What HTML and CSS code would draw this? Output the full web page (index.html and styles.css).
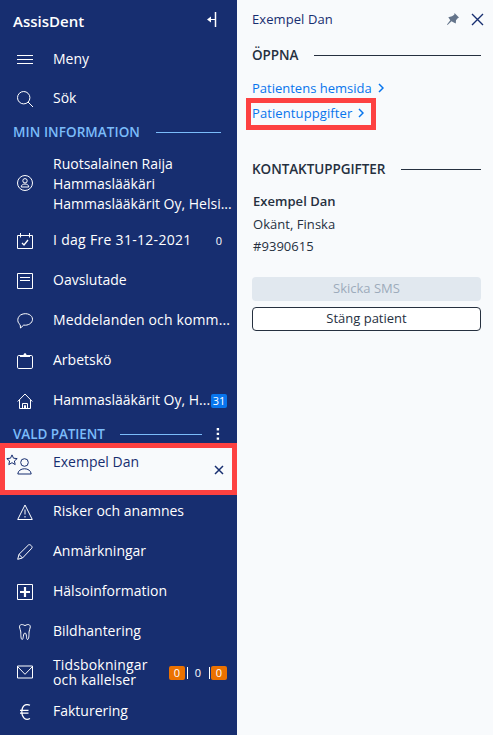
FILE: index.html
```html
<!DOCTYPE html>
<html lang="sv">
<head>
<meta charset="utf-8">
<title>AssisDent</title>
<link rel="stylesheet" href="styles.css">
</head>
<body>
<nav class="sidebar">
  <header class="brand"><span>AssisDent</span>
    <svg class="collapse" width="12" height="16" viewBox="0 0 12 16"><path d="M9.5 0v15" stroke-width="1.5"/><path d="M9 7.5H2"/><path d="M5 4.5v6l-4-3z" fill="currentColor" stroke="none"/></svg>
  </header>
  <a class="row menu"><svg class="icon" viewBox="0 0 16 16"><path d="M0 3.5h16M0 7.5h16M0 11.5h16"/></svg><span class="label">Meny</span></a>
  <a class="row search"><svg class="icon" viewBox="0 0 16 16"><circle cx="6.7" cy="6.7" r="6.2"/><path d="M11 11l5 5"/></svg><span class="label">Sök</span></a>
  <h2 class="section light"><span>MIN INFORMATION</span></h2>
  <a class="row profile"><svg class="icon" viewBox="0 0 16 16"><circle cx="8" cy="8" r="7.5"/><circle cx="8" cy="5.8" r="2.2"/><path d="M4.2 12c0-4 7.600-4 7.600 0z"/></svg><span class="label">Ruotsalainen Raija<br>Hammaslääkäri<br>Hammaslääkärit Oy, Helsi...</span></a>
  <a class="row"><svg class="icon" viewBox="0 0 16 16"><path d="M.5 2.500h15v13H.5zM3.500 0v4.500M12.500 0v4.500"/><path d="M5 10l2 2 4-5" stroke-width="1.300"/></svg><span class="label today">I dag Fre 31-12-2021</span><span class="count">0</span></a>
  <a class="row"><svg class="icon" viewBox="0 0 16 16"><path d="M.5.5h15v15H.5zM3 4.500h10M3 7.500h10"/></svg><span class="label">Oavslutade</span></a>
  <a class="row"><svg class="icon" viewBox="0 0 16 16"><path d="M3.200 11.800C-.6 9 .2 3 5 1.300c5-1.800 10.500.7 10.500 4.900 0 4-4.500 6.600-8.800 5.900L3.500 15z"/></svg><span class="label wide">Meddelanden och komm...</span></a>
  <a class="row"><svg class="icon" viewBox="0 0 16 16"><rect x=".5" y="2.500" width="15" height="13" rx="1.300"/><path d="M3 2h3.500c0-2.500 3-2.500 3 0H13v2H3z" fill="currentColor" stroke="none"/></svg><span class="label">Arbetskö</span></a>
  <a class="row"><svg class="icon" viewBox="0 0 16 16"><path d="M.7 8.500L8 1l7.300 7.500M2.500 7v8.500h11V7M5.500 15.500v-5h5v5M7.500 15.500v-3h1v3"/></svg><span class="label">Hammaslääkärit Oy, H...</span><span class="badge blue">31</span></a>
  <h2 class="section light patient-title"><span>VALD PATIENT</span><svg class="dots" width="4" height="12" viewBox="0 0 4 12"><path d="M.7 0h2.400v2.400H.7zM.7 4.700h2.400v2.400H.7zM.7 9.400h2.400v2.400H.7z"/></svg></h2>
  <a class="selected">
    <svg class="star" width="12" height="12" viewBox="0 0 12 12"><path d="M6 .9l1.500 3.300 3.700.4-2.800 2.400.8 3.600L6 8.700l-3.200 1.900.8-3.600L.8 4.600l3.700-.4z"/></svg>
    <svg class="person" width="15" height="17" viewBox="0 0 15 17"><circle cx="7.500" cy="4.500" r="3.800"/><path d="M.8 16c.4-7 13-7 13.400 0z"/></svg>
    <span>Exempel Dan</span>
    <svg class="remove" width="10" height="10" viewBox="0 0 10 10"><path d="M1 1l8 8M9 1L1 9"/></svg>
  </a>
  <a class="row risk"><svg class="icon" viewBox="0 0 16 16"><path d="M8 1l7.300 14.500H.7zM8 5.500v5"/><path d="M8 12v1.500"/></svg><span class="label">Risker och anamnes</span></a>
  <a class="row"><svg class="icon" viewBox="0 0 16 16"><path d="M.7 15.300l1.300-5L11.500.9c1.500-1 4.500 1.600 3.300 3.300L5.500 14zM2 10.300L5.500 14"/></svg><span class="label">Anmärkningar</span></a>
  <a class="row"><svg class="icon" viewBox="0 0 16 16"><path d="M.5.5h15v15H.5z"/><path d="M8 3v10M3 8h10" stroke-width="2.200"/></svg><span class="label">Hälsoinformation</span></a>
  <a class="row"><svg class="icon" viewBox="0 0 16 16"><path d="M8 1.600C4.500-.3 2.500.5 2.500 3c0 1.800 1.300 3 1.300 5 0 3 0 7.500 1.400 7.500S6 9 8 9s1 6.500 2.500 6.500S12 11 12 8c0-2 1.300-3.200 1.300-5 0-2.500-2-3.300-5.300-1.400z"/></svg><span class="label">Bildhantering</span></a>
  <a class="row"><svg class="icon" viewBox="0 0 16 16"><path d="M.5 2h15v12H.5zM.5 2.500L8 10.300l7.500-7.800"/></svg><span class="label two">Tidsbokningar<br>och kallelser</span><span class="counts"><b class="badge">0</b><i></i><em>0</em><i></i><b class="badge">0</b></span></a>
  <a class="row"><svg class="icon" viewBox="0 0 16 16"><path d="M13 1.300C8.500-.8 4.800 2 4.800 7.800s3.700 9 8.200 6.700M3 6.400h8.500M3 9.200h8.500" stroke-width="1.200"/></svg><span class="label">Fakturering</span></a>
</nav>
<main class="panel">
  <header class="panel-head"><span>Exempel Dan</span>
    <svg class="pin" width="12" height="12" viewBox="0 0 12 12"><path d="M7.500 0L12 4.500l-1.300.7-1.700 2-.2 3.300L6.300 9.200 4.500 8.300.5 12 0 11.500l3.300-4.300L1.300 4.300l3.700-1 2.300-1.500z"/></svg>
    <svg class="close" width="13" height="13" viewBox="0 0 13 13"><path d="M1 1l11 11M12 1L1 12"/></svg>
  </header>
  <h2 class="section dark"><span>ÖPPNA</span></h2>
  <div class="links">
    <a>Patientens hemsida<svg viewBox="0 0 6 10"><path d="M1 1l4 4-4 4"/></svg></a>
    <a class="marked">Patientuppgifter<svg viewBox="0 0 6 10"><path d="M1 1l4 4-4 4"/></svg></a>
  </div>
  <h2 class="section dark contact-title"><span>KONTAKTUPPGIFTER</span></h2>
  <address><strong>Exempel Dan</strong><span>Okänt, Finska</span><span>#9390615</span></address>
  <div class="actions"><button disabled>Skicka SMS</button><button class="outline">Stäng patient</button></div>
</main>
</body>
</html>
```
FILE: styles.css
```css
* { box-sizing: border-box; }
body { margin: 0; width: 493px; height: 735px; overflow: hidden; display: grid; grid-template-columns: 237px 1fr; font: 14px/20px "Open Sans", "Noto Sans", sans-serif; background: #f8fafc; }
svg { fill: none; stroke: currentColor; stroke-width: 1; flex: none; }
.sidebar { background: #172e70; color: #fff; height: 735px; }
.brand { height: 39px; padding: 0 19px 0 13px; display: flex; align-items: center; justify-content: space-between; font-weight: 600; font-size: 15px; }
.brand span { margin-top: 2px; }
.row { display: flex; align-items: center; height: 40px; padding: 0 10px 0 17px; position: relative; }
.icon { width: 16px; height: 16px; }
.label { margin: -3px 0 0 20px; white-space: nowrap; }
.wide { letter-spacing: .13px; }
.today { letter-spacing: .3px; }
.menu { height: 41px; }
.menu .label, .search .label { margin-top: -2px; }
.search { height: 38px; }
.section { display: flex; align-items: center; margin: 0; font-size: 13.5px; font-weight: 600; line-height: 20px; white-space: nowrap; }
.section::after { content: ""; flex: 1; height: 1px; background: currentColor; margin-left: 16px; }
.light { color: #7bbcfa; height: 28px; padding: 0 16px 0 13px; letter-spacing: .06px; }
.profile { height: 75px; }
.profile .icon { margin-top: -2px; }
.profile .label { margin-top: 0; }
.count { margin: 0 5px 0 auto; font-size: 11px; }
.badge { width: 16px; height: 14px; border-radius: 2px; background: #eb7100; font-size: 11px; line-height: 14px; font-weight: 400; text-align: center; }
.blue { background: #0875ed; margin-left: auto; }
.patient-title { height: 22px; padding: 4px 17px 0 13px; letter-spacing: -.08px; }
.patient-title::after { margin-left: 15px; }
.dots { order: 2; margin-left: 14px; color: #fff; fill: #fff; stroke: none; }
.selected { display: flex; height: 52px; border: 5px solid #fd4141; background: #f8fafc; color: #172e70; padding: 4px 8px 0 1px; align-items: flex-start; }
.star { margin-top: 2px; }
.person { margin: 6px 0 0 -1px; }
.selected span { margin-left: 21px; }
.remove { margin: 13px 0 0 auto; stroke-width: 1.5; }
.risk { height: 37px; padding-bottom: 3px; }
.two { line-height: 15px; margin-top: -1px; letter-spacing: .15px; }
.counts { display: flex; margin-left: auto; align-items: center; margin-top: 1px; }
.counts i { width: 1px; height: 12px; background: #fff; margin: 0 1px 0 2px; }
.counts em { width: 18px; text-align: center; font: 11px/14px "Open Sans", sans-serif; }
.panel { padding: 0 12px 0 15px; color: #26303f; }
.panel-head { display: flex; align-items: center; height: 38px; color: #172e70; font-size: 13px; letter-spacing: .08px; margin-right: -3px; }
.panel-head span { margin-top: -1px; }
.pin { margin-left: auto; color: #64748b; fill: currentColor; stroke: none; }
.close { margin-left: 12px; stroke-width: 1.4; }
.dark { height: 35px; }
.dark span { margin-top: -2px; letter-spacing: -.05px; }
.links { height: 79px; padding-top: 2px; color: #0875ed; font-size: 13px; display: flex; flex-direction: column; align-items: flex-start; }
.links a { display: flex; align-items: center; height: 25px; white-space: nowrap; }
.links svg { width: 6px; height: 10px; margin-left: 6px; stroke-width: 1.5; }
.links .marked { height: 32px; margin: -2px 0 0 -6px; border: 5px solid #fd4141; padding: 0 7px 3px 1px; letter-spacing: .1px; }
address { display: flex; flex-direction: column; font-style: normal; font-size: 13px; line-height: 22px; padding: 2px 0 0 1px; letter-spacing: .04px; }
strong { font-weight: 600; line-height: 24px; }
.actions { display: grid; gap: 6px; margin-top: 20px; }
button { height: 24px; border: 0; border-radius: 4px; padding: 0 0 2px; font: 13px/20px "Open Sans", sans-serif; background: #e1e8ef; color: #9dabbb; }
button.outline { background: #fff; border: 1px solid #26303f; color: #26303f; }
```
